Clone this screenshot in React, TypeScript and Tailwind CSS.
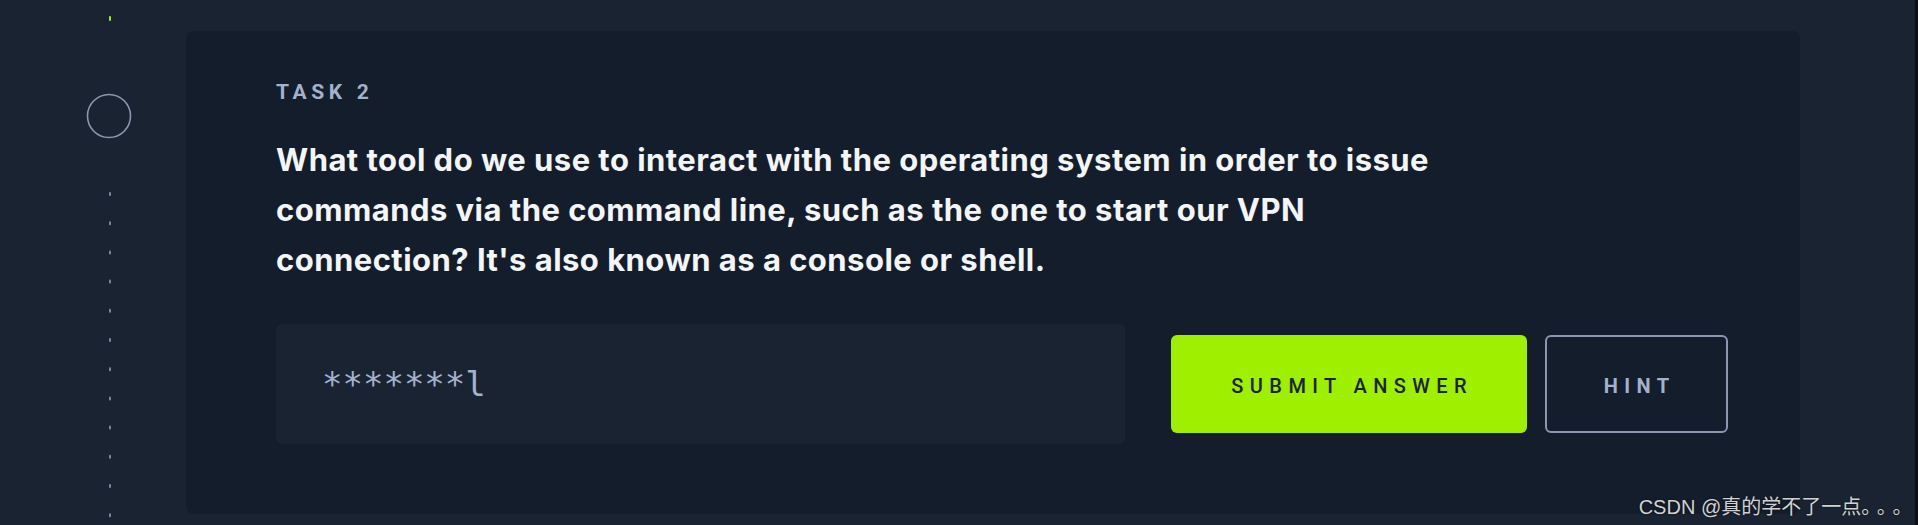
import React, { useState } from 'react';

const Timeline: React.FC = () => {
  // dashed trail below the task marker
  const dots = Array.from({ length: 12 }, (_, i) => 192 + i * 29.2);
  return (
    <svg width="186" height="525" viewBox="0 0 186 525" className="block">
      <rect x="109" y="16" width="2" height="5" rx="1" fill="#9fef00" />
      <circle cx="109" cy="116" r="21.5" fill="none" stroke="#8c97af" strokeWidth="1.6" />
      {dots.map((y) => (
        <rect key={y} x="109" y={y} width="2" height="4" rx="1" fill="#7d879c" />
      ))}
    </svg>
  );
};

const App: React.FC = () => {
  const [answer, setAnswer] = useState('*******l');

  return (
    <div className="relative flex h-[525px] w-[1918px] overflow-hidden bg-[#1a2332]">
      <div className="w-[186px] shrink-0">
        <Timeline />
      </div>

      {/* Task card */}
      <div className="mt-[31px] h-[483px] w-[1614px] shrink-0 rounded-lg bg-[#141d2b] pl-[90px] pr-[72px] pt-[49px]">
        <div
          className="text-[21px] font-bold leading-[24px] tracking-[0.22em] text-[#a4b1cd]"
          style={{ fontFamily: 'Roboto, "Liberation Sans", sans-serif' }}
        >
          TASK 2
        </div>

        <p
          className="mt-[31px] text-[31px] font-bold leading-[50px] tracking-[0.015em] text-[#f4f5f7]"
          style={{ fontFamily: 'Inter, "Liberation Sans", sans-serif' }}
        >
          What tool do we use to interact with the operating system in order to issue
          <br />
          commands via the command line, such as the one to start our VPN
          <br />
          connection? It's also known as a console or shell.
        </p>

        <div className="mt-[39px] flex items-center">
          <input
            value={answer}
            onChange={(e) => setAnswer(e.target.value)}
            className="h-[120px] w-[849px] rounded-md bg-[#1a2332] pl-[46px] text-[34px] text-[#a4b1cd] outline-none"
            style={{ fontFamily: '"DejaVu Sans Mono", "Liberation Mono", monospace' }}
          />
          <button
            className="ml-[46px] flex h-[98px] w-[356px] items-center justify-center rounded-md bg-[#9fef00] pl-[0.32em] pt-[4px] text-[20px] font-medium tracking-[0.32em] text-[#1a2332]"
            style={{ fontFamily: 'Roboto, "Liberation Sans", sans-serif' }}
          >
            SUBMIT ANSWER
          </button>
          <button
            className="ml-[18px] flex h-[98px] w-[183px] items-center justify-center rounded-md border-2 border-[#8c97af] pl-[0.32em] pt-[4px] text-[20px] font-bold tracking-[0.32em] text-[#a4b1cd]"
            style={{ fontFamily: 'Roboto, "Liberation Sans", sans-serif' }}
          >
            HINT
          </button>
        </div>
      </div>

      <div className="flex-1" />
      <div className="w-[3px] shrink-0 bg-[#0f0f0f]" />

      {/* page watermark */}
      <div
        className="absolute bottom-[6px] right-0 text-[20px] leading-[24px] text-[#d2d2d2] [text-shadow:0_0_2px_rgba(0,0,0,0.6)]"
        style={{ fontFamily: '"Liberation Sans", "Noto Sans CJK SC", sans-serif' }}
      >
        CSDN @真的学不了一点<span className="tracking-[0.28em]">。。。</span>
      </div>
    </div>
  );
};

export default App;
